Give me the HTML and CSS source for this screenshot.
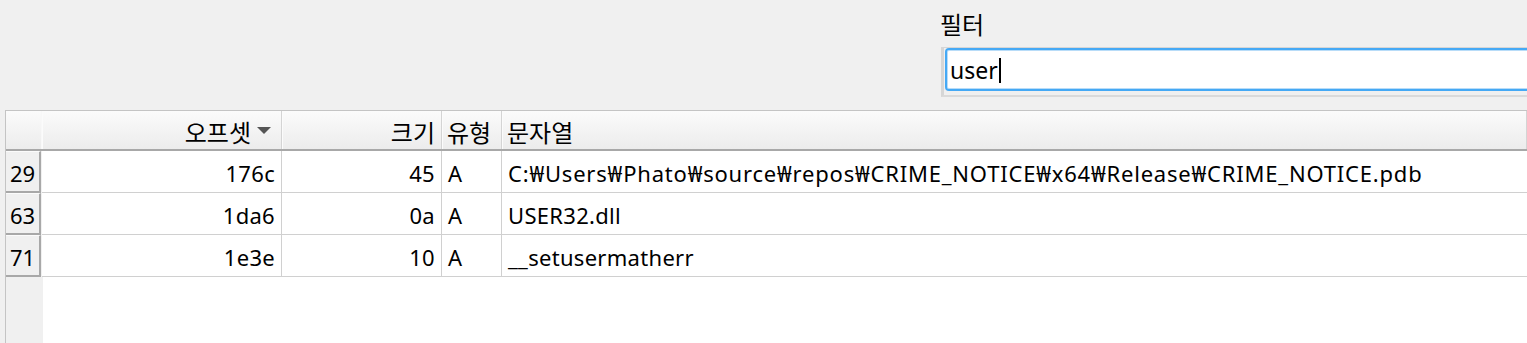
FILE: index.html
```html
<!DOCTYPE html>
<html lang="ko">
<head>
    <meta charset="UTF-8">
    <title>문자열</title>
    <link rel="stylesheet" href="styles.css">
</head>
<body>

<div class="filter-panel">
    <label class="filter-label" for="filter">필터</label>
    <div class="filter-frame">
        <div class="filter-box">
            <span class="filter-text">user</span><span class="caret"></span>
        </div>
    </div>
</div>

<div class="strings-table">
    <div class="row head">
        <div class="corner"></div>
        <div class="hcell num">오프셋<span class="sort-arrow"></span></div>
        <div class="hcell num">크기</div>
        <div class="hcell">유형</div>
        <div class="hcell">문자열</div>
    </div>

    <div class="row">
        <div class="row-head">29</div>
        <div class="cell num">176c</div>
        <div class="cell num">45</div>
        <div class="cell">A</div>
        <div class="cell path">C:₩Users₩Phato₩source₩repos₩CRIME_NOTICE₩x64₩Release₩CRIME_NOTICE.pdb</div>
    </div>
    <div class="row">
        <div class="row-head">63</div>
        <div class="cell num">1da6</div>
        <div class="cell num">0a</div>
        <div class="cell">A</div>
        <div class="cell">USER32.dll</div>
    </div>
    <div class="row">
        <div class="row-head">71</div>
        <div class="cell num">1e3e</div>
        <div class="cell num">10</div>
        <div class="cell">A</div>
        <div class="cell">__setusermatherr</div>
    </div>
</div>

</body>
</html>
```

FILE: styles.css
```css
body {
    font-family: "Noto Sans", "Noto Sans CJK KR", sans-serif;
    font-size: 22px;
    color: #000;
    background-color: #f0f0f0;
    margin: 0;
    padding: 0;
    height: 343px;
    overflow: hidden;
}

/* 필터 */
.filter-panel {
    margin-left: 940px;
    padding-top: 6px;
    height: 102px;
    box-sizing: border-box;
}
.filter-label {
    display: block;
    font-family: "Noto Sans CJK KR", sans-serif;
    font-size: 24px;
    height: 41px;
    line-height: 36px;
}
.filter-frame {
    margin-left: 1px;
    width: 700px;
    height: 50px;
    border-top: 1px solid #d6d6d6;
    border-left: 3px solid #d6d6d6;
    border-bottom: 2px solid #dadada;
    box-sizing: border-box;
}
.filter-box {
    margin-left: 1px;
    height: 43px;
    background: white;
    border: 2px solid #45a9f5;
    border-radius: 4px;
    box-shadow: inset 0 0 0 1px #b8dcf8;
    box-sizing: border-box;
    display: flex;
    align-items: center;
    padding-left: 3px;
    font-size: 23px;
}
.caret {
    display: inline-block;
    width: 2px;
    height: 25px;
    background: black;
    margin-left: 1px;
    margin-top: 2px;
}

/* 표 */
.strings-table {
    margin-left: 5px;
    margin-top: 8px;
    height: 240px;
    border-top: 1px solid #c4c4c4;
    border-left: 1px solid #c4c4c4;
    background: linear-gradient(to right, #f0f0f0 37px, white 37px);
}
.row {
    display: grid;
    grid-template-columns: 36px 240px 160px 60px 1fr;
    height: 42px;
}
.row.head {
    height: 40px;
    background: linear-gradient(#fbfbfb, #ececec);
    border-bottom: 2px solid #a8a8a8;
    box-sizing: border-box;
    font-family: "Noto Sans CJK KR", sans-serif;
    font-size: 24px;
}
.corner {
    border-right: 1px solid #f8f8f8;
}
.hcell {
    display: flex;
    align-items: center;
    padding: 3px 6px 0 5px;
    border-right: 1px solid #d4d4d4;
    box-shadow: inset 1px 0 0 #fbfbfb;
}
.hcell.num {
    justify-content: flex-end;
}
.sort-arrow {
    width: 0;
    height: 0;
    border-left: 7px solid transparent;
    border-right: 7px solid transparent;
    border-top: 7px solid #555;
    margin: 0 4px 3px 6px;
}
.row-head {
    background: #f0f0f0;
    border-top: 1px solid #fbfbfb;
    border-right: 2px solid #a8a8a8;
    border-bottom: 2px solid #a8a8a8;
    display: flex;
    align-items: center;
    padding: 2px 0 0 4px;
    box-sizing: border-box;
    margin-right: 1px;
}
.cell {
    display: flex;
    align-items: center;
    padding: 2px 6px 0;
    background: white;
    border-right: 1px solid #d0d0d0;
    border-bottom: 1px solid #d0d0d0;
    white-space: nowrap;
    letter-spacing: 0.3px;
}
.cell.num {
    justify-content: flex-end;
}
.cell.path {
    letter-spacing: 0.8px;
}
.cell:last-child {
    border-right: none;
}
```
